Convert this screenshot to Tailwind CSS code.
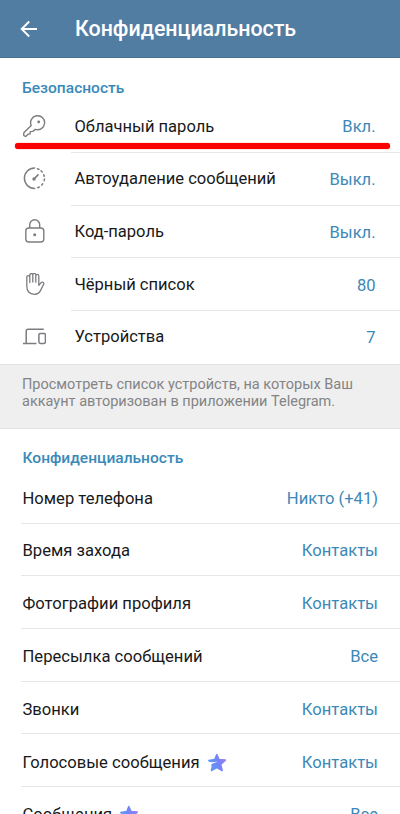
<!DOCTYPE html>
<html lang="ru">
<head>
<meta charset="utf-8">
<title>Конфиденциальность</title>
<script src="https://cdn.jsdelivr.net/npm/@tailwindcss/browser@4"></script>
</head>
<body class="bg-white font-[Roboto,'Noto_Sans',sans-serif] text-[16.55px] leading-5 text-[#17191b]">
<div class="relative h-[814px] w-[400px] overflow-hidden">
  <header class="flex h-[58px] items-center border-b border-[#4a7292] bg-[#527da3] pl-5 text-white">
    <svg class="h-[18px] w-[18px]" viewBox="0 0 18 18" fill="none" stroke="currentColor" stroke-width="1.9"><path d="M17 9H2M9.200 1.500 1.700 9l7.500 7.500"/></svg>
    <h1 class="ml-[37px] text-[21.4px] font-medium leading-6">Конфиденциальность</h1>
  </header>

  <section>
    <h2 class="h-[42.4px] pl-[22px] pt-5 text-[15.55px] font-medium text-[#3a8ab9]">Безопасность</h2>
    <div class="flex h-[52.7px] items-center pl-[22px]">
      <svg class="h-6 w-6 shrink-0 text-[#7b7d80]" viewBox="0 0 24 24" fill="none" stroke="currentColor" stroke-width="1.4" stroke-linejoin="round"><path d="M9.200 10.500A7 7 0 1 1 13.300 14.300l-2.400 2.100-2.600.2-.2 2.300-2.100.3-1.500 1.700c-1.400 1-3.200-.1-2.800-1.800l.3-1.500Z"/><circle cx="16.700" cy="6.900" r="1.400" fill="currentColor" stroke="none"/></svg>
      <div class="ml-[25px] flex h-full grow items-center justify-between border-b border-[#e6e6e6] pl-[3.500px] pr-[24.500px]"><span class="pt-px">Облачный пароль</span><span class="pt-[2.500px] text-[#3c88b6]">Вкл.</span></div>
    </div>
    <div class="flex h-[52.7px] items-center pl-[22px]">
      <svg class="h-6 w-6 shrink-0 text-[#7b7d80]" viewBox="0 0 24 24" fill="none" stroke="currentColor" stroke-width="1.5" stroke-linecap="round"><path d="M12.600 21.500A10.200 10.200 0 1 1 12.600 1.100"/><path d="M15.500 1.700l1.500.7M19 3.800l1.200 1.200M21.800 7.700l.4 1.500M22.400 12.100l-.2 1.600M20.700 16.800l-1 1.300M17.300 20l-1.500.7"/><path d="m12 12 4-4.200" stroke-width="1.700"/><circle cx="12" cy="12" r="1.700" fill="currentColor" stroke="none"/></svg>
      <div class="ml-[25px] flex h-full grow items-center justify-between border-b border-[#e6e6e6] pl-[3.500px] pr-[24.500px]"><span class="pt-px">Автоудаление сообщений</span><span class="pt-[3px] text-[#3c88b6]">Выкл.</span></div>
    </div>
    <div class="flex h-[52.7px] items-center pl-[22px]">
      <svg class="h-6 w-6 shrink-0 overflow-visible text-[#7b7d80]" viewBox="0 0 24 24" fill="none" stroke="currentColor" stroke-width="1.4"><rect x="3.800" y="8" width="18" height="14" rx="3"/><path d="M7.700 8V4.700a5 5 0 0 1 10 0V8"/><circle cx="12.700" cy="14.800" r="1.500" fill="currentColor" stroke="none"/></svg>
      <div class="ml-[25px] flex h-full grow items-center justify-between border-b border-[#e6e6e6] pl-[3.500px] pr-[24.500px]"><span>Код-пароль</span><span class="pt-0.5 text-[#3c88b6]">Выкл.</span></div>
    </div>
    <div class="flex h-[52.7px] items-center pl-[22px]">
      <svg class="h-6 w-6 shrink-0 text-[#7b7d80]" viewBox="0 0 24 24" fill="none" stroke="currentColor" stroke-width="1.3" stroke-linecap="round" stroke-linejoin="round"><path d="M4.800 12.900V4.100a1.500 1.500 0 0 1 3 0V9.500V2a1.500 1.500 0 0 1 3 0V9V1.900a1.500 1.500 0 0 1 3 0V9.200V2.900a1.500 1.500 0 0 1 3 0V12.400l2.100-2.600c1.200-1.400 3.500-.4 2.800 1.200l-3.200 6.600c-1.300 2.600-3.100 3.700-6 3.700-5.300 0-7.700-3.200-7.700-8.400Z"/></svg>
      <div class="ml-[25px] flex h-full grow items-center justify-between border-b border-[#e6e6e6] pl-[3.500px] pr-[24.500px]"><span class="pt-px">Чёрный список</span><span class="pt-[3px] text-[#3c88b6]">80</span></div>
    </div>
    <div class="flex h-[52.7px] items-center pl-[22px]">
      <svg class="h-6 w-6 shrink-0 text-[#7b7d80]" viewBox="0 0 24 24" fill="none" stroke="currentColor" stroke-width="1.5"><path d="M1 18.400h13.500M4.200 18.400V6.300a2 2 0 0 1 2-2H21.800"/><rect x="16.900" y="8.600" width="6.500" height="9.800" rx="1.300"/></svg>
      <div class="ml-[25px] flex h-full grow items-center justify-between pl-[3.500px] pr-[24.500px]"><span>Устройства</span><span class="pt-0.5 text-[#3c88b6]">7</span></div>
    </div>
  </section>

  <p class="h-[64.7px] whitespace-nowrap border-y border-[#e3e3e3] bg-[#efefef] pl-[22px] pt-3 text-[14.5px] leading-[16.7px] text-[#838486]">Просмотреть список устройств, на которых Ваш<br>аккаунт авторизован в приложении Telegram.</p>

  <section class="pl-[21px] text-[16.6px]">
    <h2 class="h-[42.300px] pl-[1.500px] pt-[19px] text-[15.55px] font-medium text-[#3a8ab9]">Конфиденциальность</h2>
    <div class="flex h-[52.7px] items-center justify-between border-b border-[#e6e6e6] pl-[1.500px] pr-[22px] pt-1"><span>Номер телефона</span><span class="text-[#3c88b6]">Никто (+41)</span></div>
    <div class="flex h-[52.7px] items-center justify-between border-b border-[#e6e6e6] pl-[1.500px] pr-[22px] pt-1"><span>Время захода</span><span class="text-[#3c88b6]">Контакты</span></div>
    <div class="flex h-[52.7px] items-center justify-between border-b border-[#e6e6e6] pl-[1.500px] pr-[22px] pt-[4.500px]"><span>Фотографии профиля</span><span class="text-[#3c88b6]">Контакты</span></div>
    <div class="flex h-[52.7px] items-center justify-between border-b border-[#e6e6e6] pl-[1.500px] pr-[22px] pt-[4.500px]"><span>Пересылка сообщений</span><span class="text-[#3c88b6]">Все</span></div>
    <div class="flex h-[52.7px] items-center justify-between border-b border-[#e6e6e6] pl-[1.500px] pr-[22px] pt-[4.500px]"><span>Звонки</span><span class="text-[#3c88b6]">Контакты</span></div>
    <div class="flex h-[52.7px] items-center justify-between border-b border-[#e6e6e6] pl-[1.500px] pr-[22px] pt-[5px]">
      <span class="flex items-center gap-[7px]">Голосовые сообщения
        <svg class="h-5 w-5" viewBox="0 0 20 20"><defs><linearGradient id="star" x1="0" y1=".6" x2="1" y2=".3"><stop offset="0" stop-color="#5b9df5"/><stop offset=".5" stop-color="#6f86f8"/><stop offset="1" stop-color="#a07af0"/></linearGradient></defs><path d="M9.800 1.500l2.300 5 6.200.6-4.600 4.400 1.500 6.100L9.800 14.500l-5.400 3 1-4.700L1.800 7.400l6-.9Z" fill="url(#star)" stroke="url(#star)" stroke-width="1.500" stroke-linejoin="round"/><path d="M.300 8.700c4 .9 7 .4 10.500-.3-3 1.400-5.200 1.900-7 3.700L.300 9.500Z" fill="#fff"/></svg></span>
      <span class="text-[#3c88b6]">Контакты</span></div>
    <div class="flex h-[52.7px] items-center justify-between pl-[1.500px] pr-[22px] pt-1">
      <span class="flex items-center gap-[7px]">Сообщения
        <svg class="h-5 w-5" viewBox="0 0 20 20"><path d="M9.800 1.500l2.300 5 6.200.6-4.600 4.400 1.500 6.100L9.800 14.500l-5.400 3 1-4.700L1.800 7.400l6-.9Z" fill="url(#star)" stroke="url(#star)" stroke-width="1.500" stroke-linejoin="round"/></svg></span>
      <span class="text-[#3c88b6]">Все</span></div>
  </section>

  <div class="absolute left-[15px] top-[143px] h-[5.500px] w-[375px] rounded-full bg-[#fb0000] shadow-[0_0_1px_#fb0000]"></div>
</div>
</body>
</html>
